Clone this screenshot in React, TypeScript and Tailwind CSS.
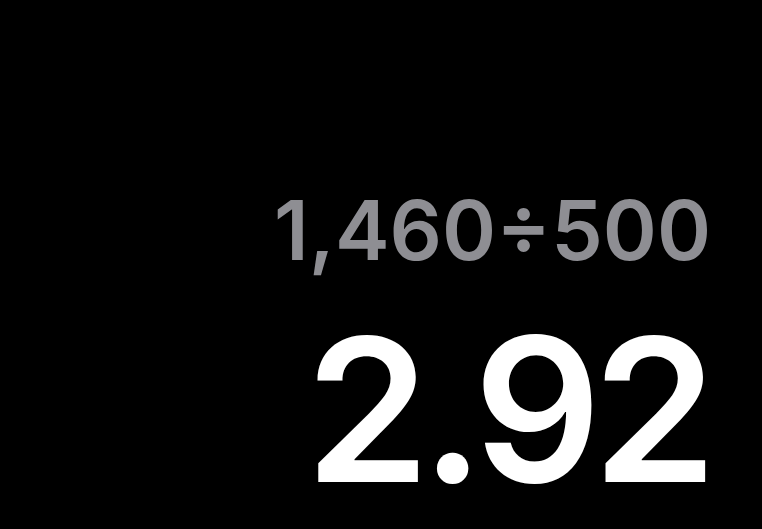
export default function App() {
  return (
    <div className="flex h-screen w-full flex-col items-end justify-end bg-black pb-[5px] pr-[51px] font-['Inter',sans-serif]">
      {/* expression line */}
      <div className="text-[82px] font-semibold leading-[1.2] text-[#8e8e93]">1,460÷500</div>
      {/* result */}
      <div className="mr-[3px] mt-[14px] text-[200px] font-semibold leading-[1.15] tracking-[-9px] text-white">2.92</div>
    </div>
  );
}
